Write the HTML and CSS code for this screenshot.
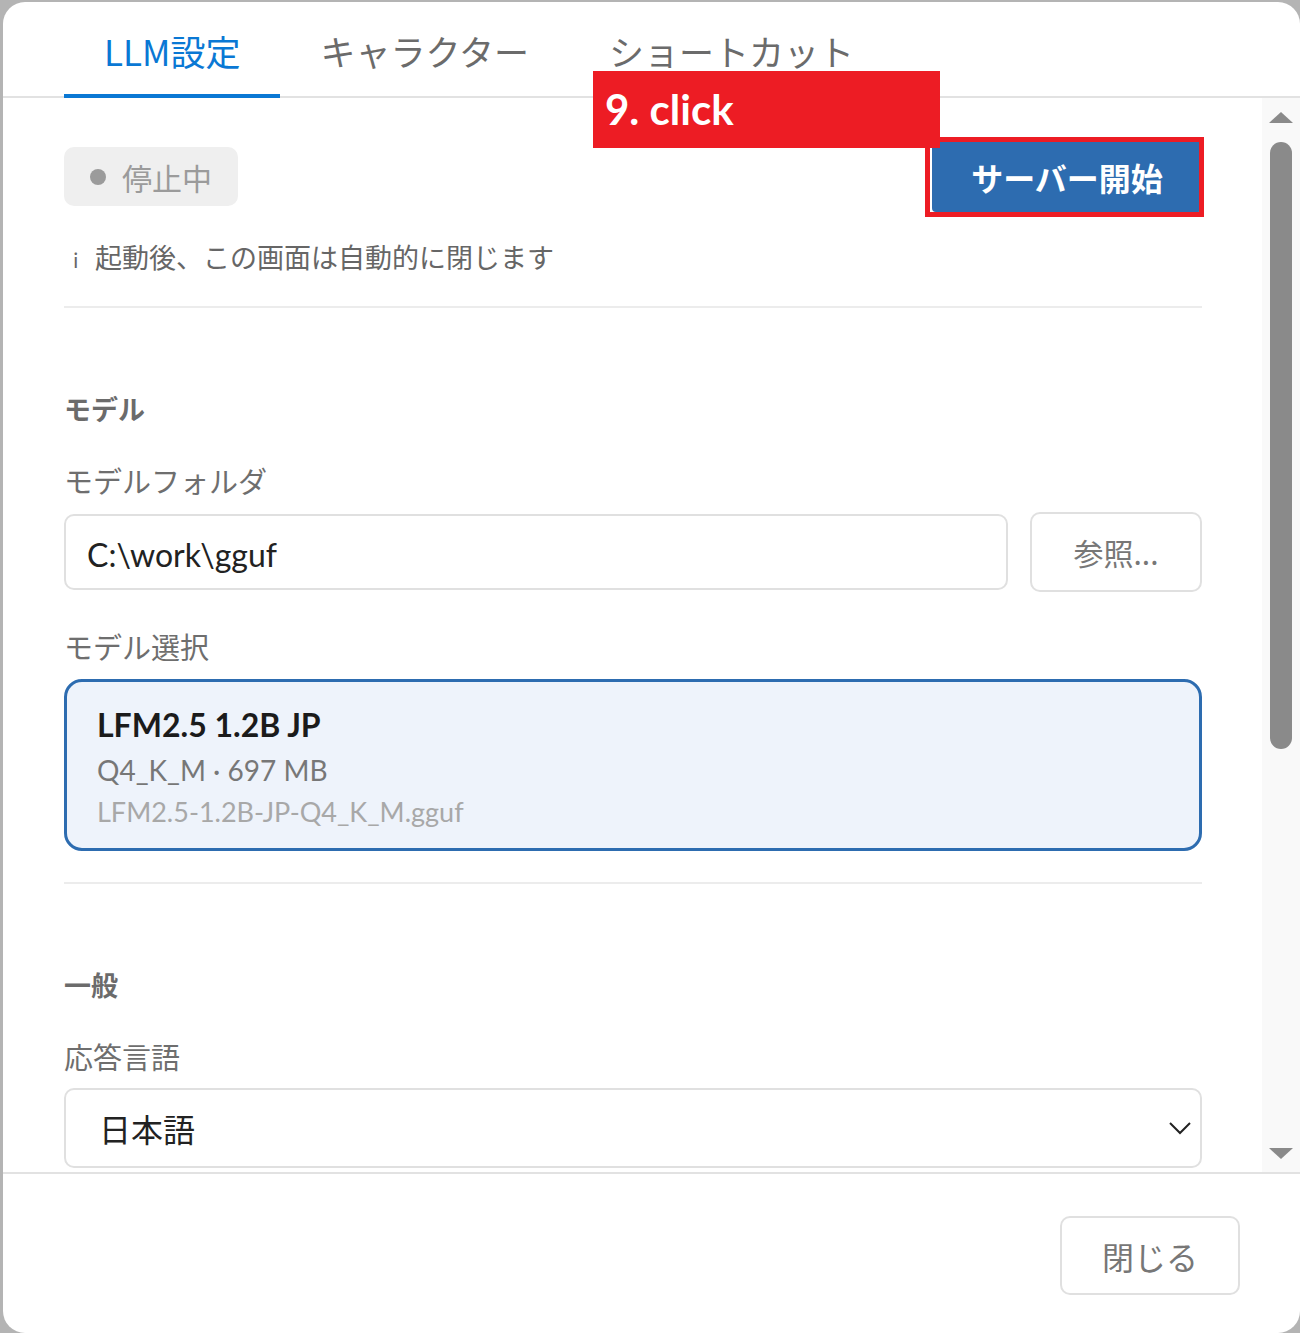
FILE: index.html
```html
<!DOCTYPE html>
<html>
<head>
    <meta name="viewport" content="width=device-width, initial-scale=1.0">
    <title>設定</title>
    <link rel="stylesheet" href="styles.css">
</head>
<body>
<div class="dialog">
    <!-- Tabs -->
    <nav class="tabs">
        <a class="tab active">LLM設定</a>
        <a class="tab">キャラクター</a>
        <a class="tab">ショートカット</a>
    </nav>

    <div class="body">
        <div class="content">
            <div class="status-row">
                <div class="status-pill"><span class="dot"></span>停止中</div>
                <button type="button" class="start-button">サーバー開始</button>
            </div>
            <p class="info"><span class="info-i">i</span>起動後、この画面は自動的に閉じます</p>
            <hr class="divider">

            <h3 class="section-title">モデル</h3>
            <label class="field-label">モデルフォルダ</label>
            <div class="folder-row">
                <div class="text-input">C:\work\gguf</div>
                <button type="button" class="plain-button browse">参照...</button>
            </div>

            <label class="field-label">モデル選択</label>
            <div class="model-card">
                <div class="model-name">LFM2.5 1.2B JP</div>
                <div class="model-meta">Q4_K_M · 697 MB</div>
                <div class="model-file">LFM2.5-1.2B-JP-Q4_K_M.gguf</div>
            </div>
            <hr class="divider second">

            <h3 class="section-title">一般</h3>
            <label class="field-label">応答言語</label>
            <div class="select">
                <span>日本語</span>
                <svg class="chevron" width="22" height="13" viewBox="0 0 22 13">
                    <polyline points="1,1 11,11 21,1" fill="none" stroke="#222" stroke-width="2"/>
                </svg>
            </div>
        </div>

        <!-- fake scrollbar -->
        <div class="scrollbar">
            <div class="arrow-up"></div>
            <div class="thumb"></div>
            <div class="track-fill"></div>
            <div class="arrow-down"></div>
        </div>
    </div>

    <div class="footer">
        <button type="button" class="plain-button close">閉じる</button>
    </div>

    <!-- annotation overlay -->
    <div class="note-label">9. click</div>
    <div class="note-frame"></div>
</div>
</body>
</html>
```

FILE: styles.css
```css
/* Reset */
body, html {
    margin: 0;
    width: 100%;
    height: 100%;
}

body {
    background-color: #b4b4b4;
    font-family: "Noto Sans CJK JP", "Noto Sans", sans-serif;
    overflow: hidden;
}

.dialog {
    position: relative;
    margin: 2px 0 0 3px;
    width: 1297px;
    height: 1331px;
    background: #fff;
    border-radius: 22px;
    display: flex;
    flex-direction: column;
    overflow: hidden;
}

/* Tabs */
.tabs {
    display: flex;
    height: 96px;
    box-sizing: border-box;
    padding-left: 61px;
    border-bottom: 2px solid #e2e2e2;
    flex-shrink: 0;
}
.tab {
    display: flex;
    align-items: center;
    padding: 4px 40px 0;
    font-size: 35px;
    color: #6b6b6b;
    border-bottom: 4px solid transparent;
    margin-bottom: -2px;
    cursor: pointer;
}
.tab.active {
    color: #0a78d4;
    border-bottom-color: #0a78d4;
}

.body {
    flex: 1;
    display: flex;
    min-height: 0;
}

.content {
    flex: 1;
    padding: 43px 60px 0 61px;
    overflow: hidden;
}

/* Status row */
.status-row {
    display: flex;
    justify-content: space-between;
    align-items: center;
}
.status-pill {
    display: flex;
    align-items: center;
    gap: 16px;
    height: 59px;
    padding: 0 26px;
    background: #efefef;
    border-radius: 10px;
    font-size: 30px;
    color: #9b9b9b;
}
.dot {
    width: 16px;
    height: 16px;
    border-radius: 50%;
    background: #9b9b9b;
}
.start-button {
    width: 270px;
    height: 71px;
    border: none;
    border-radius: 4px;
    background: #2d6cb0;
    color: #fff;
    font-family: inherit;
    font-size: 32px;
    font-weight: 700;
    cursor: pointer;
}

.info {
    margin: 26px 0 0;
    font-size: 27px;
    line-height: 38px;
    color: #666;
}
.info-i {
    display: inline-block;
    width: 22px;
    padding-left: 9px;
    font-size: 20px;
}

.divider {
    margin: 27px 0 0;
    border: none;
    border-top: 2px solid #ececec;
}
.divider.second {
    margin-top: 31px;
}

.section-title {
    margin: 82px 0 0;
    font-size: 27px;
    line-height: 38px;
    font-weight: 700;
    color: #6b6b6b;
}

.field-label {
    display: block;
    margin-top: 32px;
    font-size: 29px;
    line-height: 40px;
    color: #6e6e6e;
}

/* Folder input */
.folder-row {
    display: flex;
    align-items: center;
    gap: 22px;
    margin-top: 12px;
}
.text-input {
    flex: 1;
    height: 76px;
    box-sizing: border-box;
    display: flex;
    align-items: center;
    padding: 5px 0 0 21px;
    border: 2px solid #e0e0e0;
    border-radius: 10px;
    font-family: Lato, "Noto Sans", sans-serif;
    font-size: 32px;
    color: #222;
}
.plain-button {
    background: #fff;
    border: 2px solid #e0e0e0;
    border-radius: 10px;
    font-family: inherit;
    color: #777;
    cursor: pointer;
}
.browse {
    width: 172px;
    height: 80px;
    font-size: 30px;
}

.folder-row + .field-label {
    margin-top: 34px;
}

/* Model card */
.model-card {
    margin-top: 13px;
    padding: 21px 30px 17px;
    border: 3px solid #2d6cb0;
    border-radius: 18px;
    background: #eef3fb;
    font-family: Lato, "Noto Sans", sans-serif;
}
.model-name {
    font-size: 32px;
    line-height: 44px;
    font-weight: 700;
    color: #1b1b1b;
}
.model-meta {
    margin-top: 2px;
    font-size: 28px;
    line-height: 42px;
    color: #777;
}
.model-file {
    margin-top: 2px;
    font-size: 27px;
    line-height: 38px;
    color: #a8a8a8;
}

/* Select */
.select {
    margin-top: 12px;
    height: 80px;
    box-sizing: border-box;
    display: flex;
    align-items: center;
    justify-content: space-between;
    padding: 0 9px 0 33px;
    border: 2px solid #e0e0e0;
    border-radius: 10px;
    font-size: 32px;
    color: #222;
}
.select + .field-label,
.section-title + .field-label {
    margin-top: 32px;
}

/* Scrollbar */
.scrollbar {
    width: 38px;
    background: #f9f9f9;
    display: flex;
    flex-direction: column;
    align-items: center;
}
.arrow-up {
    margin-top: 14px;
    width: 0;
    height: 0;
    border-left: 12px solid transparent;
    border-right: 12px solid transparent;
    border-bottom: 11px solid #8a8a8a;
}
.thumb {
    margin-top: 19px;
    width: 22px;
    height: 607px;
    border-radius: 11px;
    background: #8a8a8a;
}
.track-fill {
    flex: 1;
}
.arrow-down {
    margin-bottom: 13px;
    width: 0;
    height: 0;
    border-left: 12px solid transparent;
    border-right: 12px solid transparent;
    border-top: 11px solid #8a8a8a;
}

/* Footer */
.footer {
    height: 161px;
    box-sizing: border-box;
    flex-shrink: 0;
    border-top: 2px solid #e2e2e2;
    display: flex;
    justify-content: flex-end;
    align-items: flex-start;
    padding: 42px 60px 0 0;
}
.close {
    width: 180px;
    height: 79px;
    font-size: 32px;
}

/* Annotation */
.note-label {
    position: absolute;
    left: 590px;
    top: 69px;
    width: 347px;
    height: 77px;
    box-sizing: border-box;
    padding-left: 12px;
    background: #ed1c24;
    color: #fff;
    font-family: Lato, "Noto Sans", sans-serif;
    font-weight: 700;
    font-size: 42px;
    line-height: 77px;
}
.note-frame {
    position: absolute;
    left: 922px;
    top: 135px;
    width: 279px;
    height: 80px;
    box-sizing: border-box;
    border: 5px solid #ed1c24;
}
```
